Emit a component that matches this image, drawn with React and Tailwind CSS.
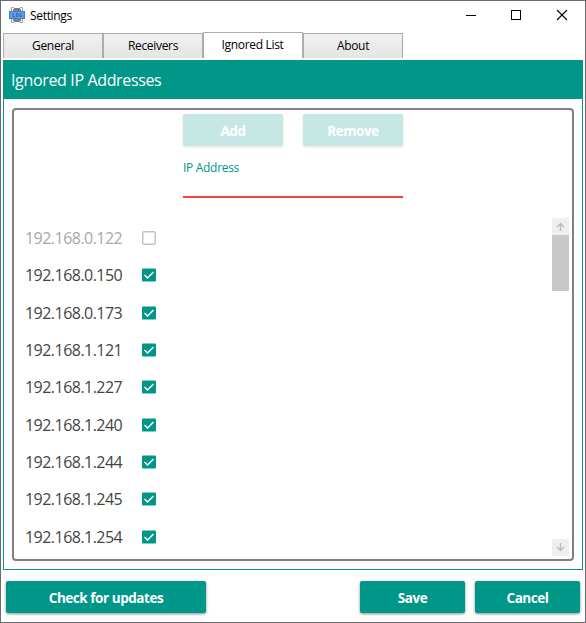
import React from "react";

const addresses = [
  { ip: "192.168.0.122", checked: false },
  { ip: "192.168.0.150", checked: true },
  { ip: "192.168.0.173", checked: true },
  { ip: "192.168.1.121", checked: true },
  { ip: "192.168.1.227", checked: true },
  { ip: "192.168.1.240", checked: true },
  { ip: "192.168.1.244", checked: true },
  { ip: "192.168.1.245", checked: true },
  { ip: "192.168.1.254", checked: true },
];

function AppIcon() {
  return (
    <svg width="16" height="16" viewBox="0 0 16 16" className="block">
      <path d="M2.500 4V.5H5M11 .5h2.500V4M2.500 12v3.500H5M11 15.500h2.500V12" fill="none" stroke="#a3a3a3" />
      <path d="M5 1h6v1h1v2h1v8h-1v2h-1v1H5v-1H4v-2H3V4h1V2h1z" fill="#7d7d7d" />
      <rect x="0" y="4" width="16" height="8" fill="#4a7cc0" />
      <rect x="1" y="5" width="14" height="6" fill="#5a9cf0" />
      <path d="M4 6v3.500H6M7.500 6.500h1.500v3H7.500zM12.500 6.500H11v3h1.500V8" fill="none" stroke="#3f66a0" strokeWidth="0.900" />
    </svg>
  );
}

function TitleBar() {
  return (
    <div className="flex h-8 shrink-0 items-start">
      <div className="ml-2 mt-[6px]">
        <AppIcon />
      </div>
      <span className="ml-[5px] mt-[7px] text-[12px] leading-4 tracking-[-0.32px] text-black">Settings</span>
      <svg width="104" height="12" viewBox="0 0 104 12" className="ml-auto mr-4 mt-2 block" fill="none" stroke="#000">
        <path d="M1 6.500h10" shapeRendering="crispEdges" />
        <rect x="46.500" y="1.500" width="9" height="9" shapeRendering="crispEdges" />
        <path d="M92 1l10 10M102 1L92 11" strokeWidth="1.100" />
      </svg>
    </div>
  );
}

function Tab({ label, active }) {
  return (
    <div
      className={
        active
          ? "flex h-[26px] w-[100px] justify-center border border-b-0 border-[#acacac] bg-white pr-px pt-[4px]"
          : "flex h-[25px] w-[100px] justify-center border border-b-0 border-[#acacac] bg-gradient-to-b from-[#f0f0f0] to-[#e5e5e5] pt-[4px]"
      }
    >
      <span className="text-[12px] leading-4 tracking-[-0.32px] text-black">{label}</span>
    </div>
  );
}

function Button({ children, className }) {
  return (
    <button
      className={
        "flex h-8 items-center justify-center rounded-[2px] pt-[2px] text-[13.500px] font-bold leading-5 tracking-[-0.450px] text-white " + className
      }
    >
      {children}
    </button>
  );
}

function CheckBox({ checked }) {
  return (
    <svg width="14" height="14" viewBox="0 0 14 14" className="block">
      {checked ? (
        <>
          <rect width="14" height="13" y="0.500" rx="1" fill="#009688" />
          <path d="M2.500 7l3 3 6-6" fill="none" stroke="#fff" strokeWidth="1.500" />
        </>
      ) : (
        <rect x="0.750" y="0.750" width="12.500" height="12.500" rx="1" fill="none" stroke="#c3c3c3" strokeWidth="1.500" />
      )}
    </svg>
  );
}

function ScrollArrow({ down }) {
  return (
    <div className="flex h-[17px] items-center justify-center bg-[#efefef]">
      <svg width="9" height="9" viewBox="0 0 9 9" className={down ? "block rotate-180" : "block"} fill="none" stroke="#bdbdbd" strokeWidth="1.500">
        <path d="M4.500 9V1.500M1 5l3.500-3.500L8 5" />
      </svg>
    </div>
  );
}

function AddressList() {
  return (
    <div className="mt-5 flex h-[338px]">
      <div className="flex flex-1 flex-col overflow-hidden pl-[11px]">
        {addresses.map((a) => (
          <div key={a.ip} className="flex h-[37.300px] shrink-0 items-center">
            <span
              className={
                "w-[117px] pt-[3px] text-[16px] leading-5 tracking-[-0.530px] " +
                (a.checked ? "text-[#444]" : "text-[#a8a8a8]")
              }
            >
              {a.ip}
            </span>
            <div className="pt-[3px]">
              <CheckBox checked={a.checked} />
            </div>
          </div>
        ))}
      </div>
      <div className="mr-[3px] flex w-[17px] flex-col">
        <ScrollArrow />
        <div className="h-14 bg-[#c8c8c8]" />
        <div className="flex-1" />
        <ScrollArrow down />
      </div>
    </div>
  );
}

export default function App() {
  return (
    <div className="flex h-[623px] w-[586px] flex-col border border-[#6b6b6b] bg-white font-['Open_Sans','Noto_Sans',sans-serif]">
      <TitleBar />
      <div className="-mt-px flex h-[26px] shrink-0 items-end pl-[2px]">
        <Tab label="General" />
        <Tab label="Receivers" />
        <Tab label="Ignored List" active />
        <Tab label="About" />
      </div>
      <div className="ml-[2px] mr-[2px] mt-[2px] flex h-[510px] shrink-0 flex-col border border-[#009688]">
        <div className="flex h-[38px] items-center bg-[#009688] pl-[7px]">
          <span className="text-[16px] tracking-[-0.350px] text-white">Ignored IP Addresses</span>
        </div>
        <div className="mx-2 mt-[9px] h-[453px] rounded-[4px] border-2 border-[#808080]">
          <div className="ml-[169px] mt-1 flex gap-5">
            <Button className="w-[100px] bg-[#c5e8e4] shadow-[0_1px_3px_rgba(0,0,0,0.12)]">Add</Button>
            <Button className="w-[100px] bg-[#c5e8e4] shadow-[0_1px_3px_rgba(0,0,0,0.12)]">Remove</Button>
          </div>
          <div className="ml-[169px] mt-[14px] h-[38px] w-[220px] border-b-2 border-[#f44336]">
            <span className="block text-[12px] leading-4 tracking-[-0.300px] text-[#009688]">IP Address</span>
          </div>
          <AddressList />
        </div>
      </div>
      <div className="mt-[11px] flex pl-[5px] pr-[5px]">
        <Button className="w-[200px] bg-[#009688] shadow-[0_1px_3px_rgba(0,0,0,0.45)]">Check for updates</Button>
        <Button className="ml-auto w-[105px] bg-[#009688] shadow-[0_1px_3px_rgba(0,0,0,0.45)]">Save</Button>
        <Button className="ml-[10px] w-[105px] bg-[#009688] shadow-[0_1px_3px_rgba(0,0,0,0.45)]">Cancel</Button>
      </div>
    </div>
  );
}
